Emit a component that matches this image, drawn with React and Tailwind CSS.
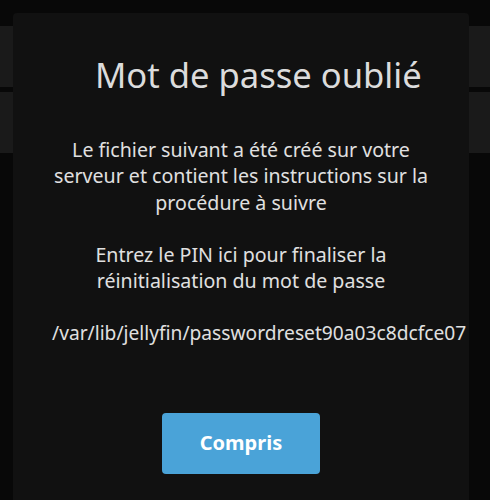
import React from "react";

export default function App() {
  return (
    <div className="relative h-[500px] w-full overflow-hidden bg-[#080808] font-['Noto_Sans',sans-serif]">
      {/* page behind the dialog */}
      <div className="flex flex-col gap-[5px] pt-[26px]">
        <div className="h-[61px] bg-[#1a1a1a]" />
        <div className="h-[61px] bg-[#1a1a1a]" />
      </div>

      <div className="absolute left-[13px] top-[13px] h-[520px] w-[456px] overflow-hidden rounded-[4px] bg-[#111111]">
        <h2 className="pl-[82px] pt-[39px] text-[34.6px] leading-[46px] font-normal text-[#dcdcdc]">
          Mot de passe oublié
        </h2>

        <div className="mt-[39px] px-[39px] text-center text-[19.6px] leading-[26.3px] text-[#e0e0e0]">
          <p>Le fichier suivant a été créé sur votre serveur et contient les instructions sur la procédure à suivre</p>
          <p className="mt-[26px]">Entrez le PIN ici pour finaliser la réinitialisation du mot de passe</p>
          <p className="mt-[26px] whitespace-nowrap text-left text-[19.2px]">/var/lib/jellyfin/passwordreset90a03c8dcfce07</p>
        </div>

        <div className="mt-[66px] flex justify-center">
          <button className="h-[61px] w-[158px] rounded-[4px] bg-[#4aa3d8] text-[20px] font-bold text-white">
            Compris
          </button>
        </div>
      </div>
    </div>
  );
}
